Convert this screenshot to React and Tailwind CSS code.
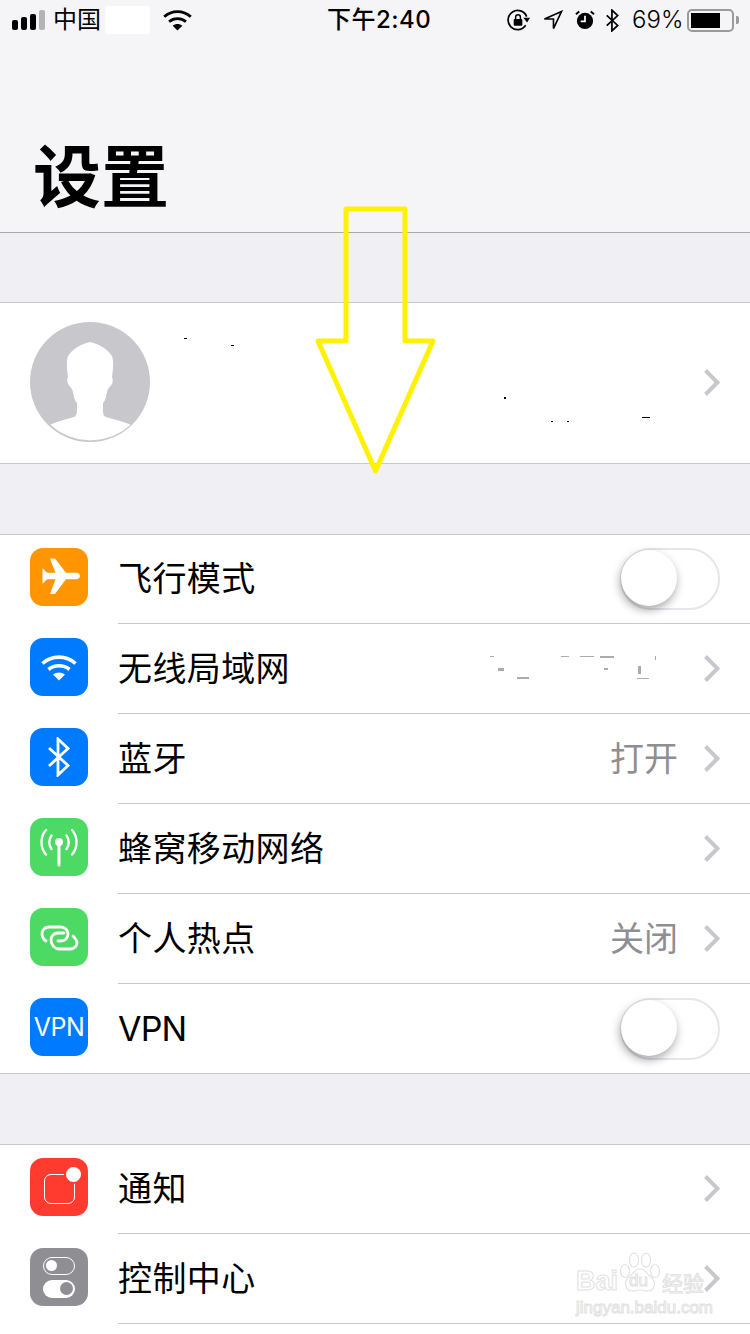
const CJK = "font-['Inter','Noto_Sans_CJK_SC',sans-serif]";

function Chevron() {
  return (
    <svg width="17" height="28" viewBox="0 0 17 28" className="shrink-0">
      <path d="M2.500 1.500L14.500 13.500L2.500 25.500" fill="none" stroke="#c7c7cc" strokeWidth="4" />
    </svg>
  );
}

function Toggle() {
  return (
    <div className="relative w-[100px] h-[62px] rounded-full border-[2px] border-[#e5e5ea] bg-white shrink-0">
      <div className="absolute left-[-1px] top-0 w-[56px] h-[56px] rounded-full bg-white shadow-[-1px_4px_10px_rgba(0,0,0,0.35)]" />
    </div>
  );
}

function Plane() {
  return (
    <svg width="58" height="58" viewBox="0 0 58 58">
      <path d="M46 24.800C49 24.800 50 27 50 28C50 29.500 48.500 31.200 46 31.200H36L25 46H20L25.500 31.200H17L12.500 36V20L17 24.800H25.500L20 10.500H25L36 24.800Z" fill="#fff" />
    </svg>
  );
}

function Wifi({ color = "#fff", w = 36, h = 27 }) {
  return (
    <svg width={w} height={h} viewBox="0 0 36 27">
      <path d="M1.500 9.500C11 1 25 1 34.500 9.500" fill="none" stroke={color} strokeWidth="3.600" />
      <path d="M7.500 15.500C13.500 10.500 22.500 10.500 28.500 15.500" fill="none" stroke={color} strokeWidth="3.600" />
      <path d="M12 20.500C15.500 17.800 20.500 17.800 24 20.500L18 26.500Z" fill={color} />
    </svg>
  );
}

function Bt({ color = "#fff", w = 24, h = 40, sw = 2.8 }) {
  return (
    <svg width={w} height={h} viewBox="0 0 24 40">
      <path d="M2 11 L21 28.500 L11 38 V2 L21 11.500 L2 29" fill="none" stroke={color} strokeWidth={sw} />
    </svg>
  );
}

function Cell() {
  return (
    <svg width="40" height="44" viewBox="0 0 40 44" fill="none" stroke="#fff" strokeLinecap="round">
      <circle cx="20" cy="17" r="4" fill="#fff" stroke="none" />
      <path d="M20 18V40" strokeWidth="3" />
      <path d="M12.500 10.500c-3 4-3 9.500 0 13.500M27.500 10.500c3 4 3 9.500 0 13.500" strokeWidth="2.400" />
      <path d="M7 5c-6 6.500-6 18 0 24.500M33 5c6 6.500 6 18 0 24.500" strokeWidth="2.400" />
    </svg>
  );
}

function Hotspot() {
  return (
    <svg width="58" height="58" viewBox="0 0 58 58" fill="none" stroke="#fff" strokeWidth="2.800" strokeLinecap="round">
      <path d="M16 33C13 31 12 29 12 26C12 22 15 19 19 19H30C35 19 38 22 38 26C38 30 35 33 31 33H28" />
      <path d="M34 25H28C24 25 21 28 21 32C21 37 25 41 29 41H40C44 41 47 38 47 35C47 32 45 30 43 28" />
    </svg>
  );
}

function Notif() {
  return (
    <div className="relative w-[31px] h-[30px] mt-[3px] rounded-[7px] border-[1.5px] border-white">
      <div className="absolute right-[-9px] top-[-10px] w-[19px] h-[19px] bg-[#ff3b30] rounded-full" />
      <div className="absolute right-[-7px] top-[-8px] w-[15px] h-[15px] bg-white rounded-full" />
    </div>
  );
}

function Switches() {
  return (
    <div className="flex flex-col gap-[5px] items-center">
      <div className="flex items-center w-[32px] h-[18px] rounded-full border-[1.5px] border-white px-[2px]">
        <div className="w-[11px] h-[11px] rounded-full bg-white" />
      </div>
      <div className="flex items-center justify-end w-[32px] h-[18px] rounded-full bg-white px-[2px]">
        <div className="w-[13px] h-[13px] rounded-full bg-[#8e8e93]" />
      </div>
    </div>
  );
}

function Row({ bg, icon, label, value, control = "chevron", first, last, latin }) {
  return (
    <div className={`flex bg-white pl-[30px] ${first || last ? "h-[89px]" : "h-[90px]"}`}>
      <div className={`flex items-center justify-center w-[58px] h-[58px] rounded-[13px] shrink-0 ${bg} ${first ? "mt-[13px]" : "mt-[14px]"}`}>
        {icon}
      </div>
      <div className={`flex items-center flex-1 ml-[30px] pr-[30px] ${last ? "" : "border-b border-[#c8c7cc]"}`}>
        <span className={`flex-1 text-[34px] leading-[40px] text-black ${latin ? "tracking-[-0.8px]" : "tracking-[0.4px]"}`}>{label}</span>
        {value && <span className="text-[34px] leading-[40px] text-[#8e8e93] mr-[25px]">{value}</span>}
        {control === "chevron" ? <Chevron /> : <Toggle />}
      </div>
    </div>
  );
}

function StatusBar() {
  return (
    <div className="relative flex items-center h-[40px] pl-[12px] pr-[11px] text-black">
      <div className="flex items-end gap-[3px] h-[20px] w-[33px]">
        <div className="w-[6px] h-[10px] rounded-[2px] bg-black" />
        <div className="w-[6px] h-[13px] rounded-[2px] bg-black" />
        <div className="w-[6px] h-[16px] rounded-[2px] bg-black" />
        <div className="w-[6px] h-[20px] rounded-[2px] bg-[#b4b4b4]" />
      </div>
      <span className="ml-[8px] w-[48px] text-[24px] leading-[30px] whitespace-nowrap">中国</span>
      <div className="ml-[4px] w-[45px] h-[28px] bg-white rounded-[3px]" />
      <div className="ml-[13px] w-[29px] flex"><Wifi color="#000" w={29} h={22} /></div>
      <span className="ml-[135px] text-[24px] leading-[30px] font-medium whitespace-nowrap tracking-[0.5px]">下午2:40</span>
      <div className="flex items-center ml-auto">
        <svg width="23" height="23" viewBox="0 0 24 24" fill="none">
          <path d="M19.500 17A10 10 0 1 1 20.500 8" stroke="#000" strokeWidth="1.800" />
          <path d="M17 9l4 5 3-5z" fill="#000" />
          <rect x="7" y="10.500" width="9" height="7" rx="1" fill="#000" />
          <path d="M9 10.500V8.500a2.500 2.500 0 0 1 5 0v2" stroke="#000" strokeWidth="1.500" />
        </svg>
        <svg className="ml-[13px]" width="20" height="20" viewBox="0 0 21 21" fill="none">
          <path d="M19.500 1.500L1.500 9.500H11V19.500Z" stroke="#000" strokeWidth="1.700" />
        </svg>
        <svg className="ml-[12px]" width="20" height="20" viewBox="0 0 21 21">
          <circle cx="10.500" cy="11.500" r="8.500" fill="#000" />
          <path d="M10.500 6V12H6" stroke="#fff" strokeWidth="1.800" fill="none" />
          <path d="M1 4.500L4.500 1.500M20 4.500L16.500 1.500" stroke="#000" strokeWidth="2" />
        </svg>
        <div className="ml-[10px] flex"><Bt color="#000" w={15} h={23} sw={3} /></div>
        <span className="ml-[12px] w-[49px] text-[24px] leading-[30px] font-light whitespace-nowrap">69%</span>
        <div className="ml-[6px] flex items-center">
          <div className="w-[47px] h-[23px] rounded-[5px] border-2 border-[#9a9a9a] p-[2px]">
            <div className="w-[29px] h-full bg-black" />
          </div>
          <div className="ml-[2px] w-[3px] h-[8px] rounded-r-[2px] bg-[#9a9a9a]" />
        </div>
      </div>
    </div>
  );
}

function Avatar() {
  return (
    <svg width="120" height="120" viewBox="0 0 120 120" className="shrink-0 mb-[2px]">
      <circle cx="60" cy="60" r="60" fill="#c8c7cc" />
      <path d="M20 103C28 99 38 97 44 95C47 94 47 90 47 87V81C44 78 44 74 43 70C42 66 40 65 38 62C37 60 37 57 38 55C37 47 36 40 38 34C42 28 50 22 60 20C70 22 78 28 82 34C84 40 83 47 82 55C83 57 83 60 82 62C80 65 78 66 77 70C76 74 76 78 73 81V87C73 90 73 94 76 95C82 97 92 99 101 103A59.500 59.500 0 0 1 20 103Z" fill="#fff" />
      <path d="M20 103A59.500 59.500 0 0 0 101 103" fill="none" stroke="#c8c7cc" strokeWidth="1" />
    </svg>
  );
}

function Specks({ className, dots, color = "#000" }) {
  return (
    <svg className={`absolute pointer-events-none ${className}`} width="750" height="1334" viewBox="0 0 750 1334">
      {dots.map(([x, y, w, h], i) => <rect key={i} x={x} y={y} width={w} height={h} fill={color} />)}
    </svg>
  );
}

function Watermark() {
  return (
    <div className="absolute left-[576px] top-[1252px] w-[134px] h-[70px] pointer-events-none font-['Liberation_Sans',sans-serif] text-transparent [-webkit-text-stroke:1px_#e2e2e2]">
      <svg className="absolute left-[42px] top-[0px]" width="44" height="42" viewBox="0 0 44 42" fill="none" stroke="#e2e2e2" strokeWidth="1.200">
        <ellipse cx="7" cy="19" rx="4.500" ry="6.500" />
        <ellipse cx="16" cy="8" rx="4.500" ry="7" />
        <ellipse cx="28" cy="8" rx="4.500" ry="7" />
        <ellipse cx="37" cy="19" rx="4.500" ry="6.500" />
        <path d="M22 17c-5 0-7 5-12 9-4 3-3 13 4 13 3 0 5-1 8-1s5 1 8 1c7 0 8-10 4-13-5-4-7-9-12-9z" />
      </svg>
      <span className="absolute left-0 top-[12px] text-[27px] leading-[34px] font-bold">Bai</span>
      <span className="absolute left-[53px] top-[19px] text-[17px] leading-[20px]">du</span>
      <span className="absolute left-[86px] top-[16px] text-[21px] leading-[28px] font-['Noto_Sans_CJK_SC',sans-serif]">经验</span>
      <span className="absolute left-0 top-[46px] text-[17px] leading-[20px] whitespace-nowrap">jingyan.baidu.com</span>
    </div>
  );
}

export default function App() {
  return (
    <div className={`relative w-[750px] h-[1334px] overflow-hidden bg-[#efeff4] ${CJK}`}>
      <div className="h-[233px] bg-[#f5f5f7] border-b border-[#a9a9ab] flex flex-col">
        <StatusBar />
        <h1 className="ml-[33px] mt-[91px] text-[68px] leading-[92px] font-bold text-black">设置</h1>
      </div>

      <div className="mt-[69px] flex items-center h-[162px] bg-white border-y border-[#c8c7cc] pl-[30px] pr-[30px]">
        <Avatar />
        <div className="flex-1" />
        <Chevron />
      </div>

      <div className="mt-[70px] border-t border-[#c8c7cc]">
        <Row first bg="bg-[#ff9500]" icon={<Plane />} label="飞行模式" control="toggle" />
        <Row bg="bg-[#007aff]" icon={<Wifi />} label="无线局域网" />
        <Row bg="bg-[#007aff]" icon={<Bt />} label="蓝牙" value="打开" />
        <Row bg="bg-[#4cd964]" icon={<Cell />} label="蜂窝移动网络" />
        <Row bg="bg-[#4cd964]" icon={<Hotspot />} label="个人热点" value="关闭" />
        <Row last latin bg="bg-[#007aff]" icon={<span className="text-white text-[25px] leading-[30px] font-normal tracking-[-0.5px]">VPN</span>} label="VPN" control="toggle" />
      </div>

      <div className="border-t border-[#c8c7cc] h-[71px]" />

      <div className="border-t border-[#c8c7cc]">
        <Row first bg="bg-[#ff3b30]" icon={<Notif />} label="通知" />
        <Row bg="bg-[#8e8e93]" icon={<Switches />} label="控制中心" />
        <div className="h-[20px] bg-white" />
      </div>

      <Specks className="left-0 top-0" dots={[[184,338,3,1],[231,345,3,1],[504,397,2,2],[551,421,2,1],[567,421,2,1],[642,417,8,1]]} />
      <Specks className="left-0 top-0" color="#aaaab0" dots={[[490,656,4,1],[498,668,6,3],[517,677,12,2],[561,656,8,1],[580,656,14,1],[600,656,14,2],[604,668,4,2],[638,666,3,8],[655,656,1,4],[637,678,12,1]]} />

      <Watermark />

      <svg className="absolute left-[314px] top-[205px] pointer-events-none" width="124" height="272" viewBox="0 0 124 272" fill="none">
        <path d="M32 4H91V136H119L61.500 266L4 136H32Z" stroke="#fff200" strokeWidth="5" strokeLinejoin="round" />
      </svg>
    </div>
  );
}
